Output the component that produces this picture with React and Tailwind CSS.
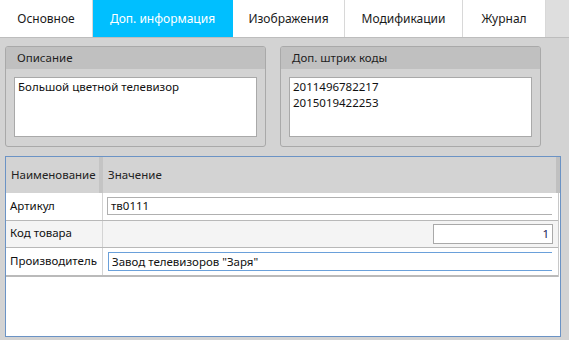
const tabs = [
  { label: "Основное", w: "w-[93px]" },
  { label: "Доп. информация", w: "w-[140px]", active: true },
  { label: "Изображения", w: "w-[112px]" },
  { label: "Модификации", w: "w-[118px]" },
  { label: "Журнал", w: "w-[83px]" },
];

function GroupBox({ title, children }) {
  return (
    <div className="w-[261px] h-[101px] flex flex-col rounded-[3px] border border-[#a9a9a9] bg-[#d3d3d3] overflow-hidden">
      <div className="h-[22px] shrink-0 bg-[#c0c0c0] flex items-center px-[11px] text-[#1e1e1e]">
        {title}
      </div>
      <div className="flex-1 px-[8px] pt-[8px] pb-[9px]">
        <div className="h-[60px] bg-white border border-[#a9a9a9] px-[3px] py-[1px] leading-[16px] text-[#111]">
          {children}
        </div>
      </div>
    </div>
  );
}

export default function App() {
  return (
    <div
      className="w-[569px] h-[340px] bg-[#d3d3d3] overflow-hidden text-[11.5px] flex flex-col"
      style={{ fontFamily: '"Noto Sans", "Open Sans", sans-serif' }}
    >
      {/* Tabs */}
      <div className="h-[38px] shrink-0 flex bg-[#dedede] border-b border-[#bdbdbd]">
        {tabs.map((t) => (
          <div
            key={t.label}
            className={`${t.w} h-full flex items-center justify-center border-r text-[12px] ${
              t.active
                ? "bg-[#00bfff] text-white border-[#00bfff]"
                : "bg-white text-[#1a1a1a] border-[#d8d8d8]"
            }`}
          >
            {t.label}
          </div>
        ))}
      </div>

      {/* Groups */}
      <div className="flex gap-[14px] pl-[5px] pt-[8px]">
        <GroupBox title="Описание">Большой цветной телевизор</GroupBox>
        <GroupBox title="Доп. штрих коды">
          <div>2011496782217</div>
          <div>2015019422253</div>
        </GroupBox>
      </div>

      {/* Grid */}
      <div className="ml-[5px] mt-[9px] w-[556px] h-[181px] border border-[#6b93c5] bg-white flex flex-col">
        <div className="h-[36px] shrink-0 flex bg-[#d3d3d3] text-[#222]">
          <div className="w-[93px] flex items-center pl-[5px]">Наименование</div>
          <div className="w-[4px] bg-[#c4c4c4]" />
          <div className="flex-1 flex items-center pl-[5px]">Значение</div>
          <div className="w-[4px] bg-[#c0c0c0]" />
        </div>

        <div className="flex flex-col border-r border-[#c8c8c8] mr-px text-[#111]">
          <div className="h-[28px] flex border-b border-[#b8b8b8]">
            <div className="w-[97px] pl-[4px] pt-[4px] border-r border-[#d4d4d4]">Артикул</div>
            <div className="flex-1 pl-[4px] pt-[4px] pr-[6px]">
              <div className="h-[18px] border-y border-l border-[#b0b0b0] pl-[3px] leading-[16px]">тв0111</div>
            </div>
          </div>

          <div className="h-[27px] flex bg-[#f4f4f4] border-b border-[#b8b8b8]">
            <div className="w-[97px] pl-[4px] pt-[3px] border-r border-[#d4d4d4]">Код товара</div>
            <div className="flex-1 flex justify-end pt-[3px] pr-[5px]">
              <div className="w-[120px] h-[20px] border border-[#a9a9a9] bg-white text-right pr-[3px] leading-[18px] text-[#1a1a5a]">
                1
              </div>
            </div>
          </div>

          <div className="h-[29px] flex border-b-2 border-[#bababa]">
            <div className="w-[97px] pl-[4px] pt-[4px] border-r border-[#d4d4d4]">Производитель</div>
            <div className="flex-1 pl-[5px] pt-[4px] pr-[6px]">
              <div className="h-[19px] border-y border-l border-[#6aa0da] pl-[3px] leading-[17px]">
                Завод телевизоров "Заря"
              </div>
            </div>
          </div>
        </div>
        <div className="flex-1" />
      </div>
    </div>
  );
}
